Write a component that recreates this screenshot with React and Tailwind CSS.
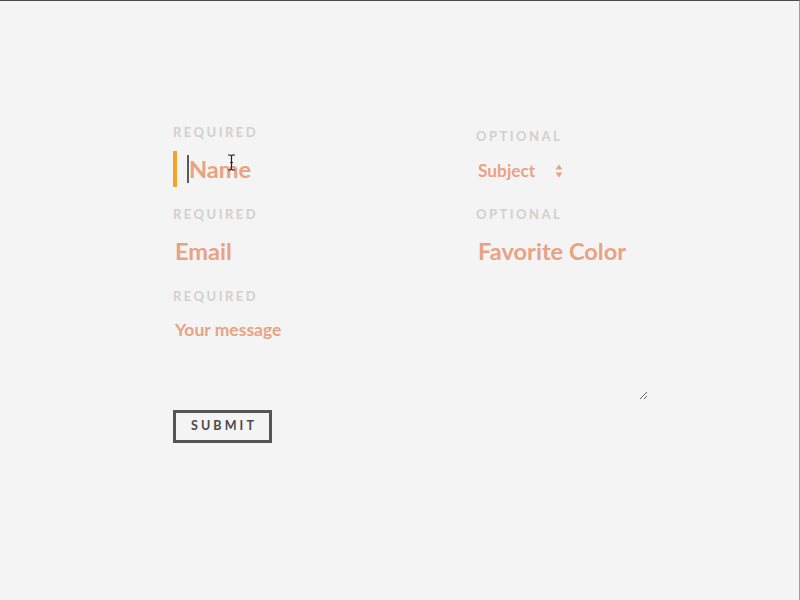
export default function App() {
  const label = "text-[13px] leading-[14px] font-bold tracking-[0.19em] text-[#d0d0d0] h-[14px]";
  const big = "text-[23.6px] leading-[36px] font-bold text-[#e9a283] h-[36px]";
  return (
    <div
      className="w-[800px] h-[600px] bg-[#f4f4f4] border-t border-t-[#4a4a4a] border-r border-r-[#a0a0a0] overflow-hidden"
      style={{ fontFamily: "Lato, 'Open Sans', sans-serif" }}
    >
      <div className="pl-[173px] pt-[124px] flex flex-col">
        <div className="grid grid-cols-[303px_172px]">
          {/* Row 1 left */}
          <div className="flex flex-col">
            <div className={label}>REQUIRED</div>
            <div className="relative mt-[12px] flex items-center h-[36px] border-l-4 border-l-[#f7a327]">
              <span className="ml-[10px] w-[2px] h-[28px] bg-[#5a5a5a]" />
              <span className={big}>Name</span>
              <svg
                className="absolute left-[50px] top-[3px]"
                width="9"
                height="17"
                viewBox="0 0 9 17"
              >
                <path d="M1 1h2.5l1 1 1-1H8M4.5 2v13M1 16h2.5l1-1 1 1H8M3 8.5h3" stroke="#222" strokeWidth="1.2" fill="none" />
              </svg>
            </div>
          </div>
          {/* Row 1 right */}
          <div className="flex flex-col pt-[4px]">
            <div className={label}>OPTIONAL</div>
            <div className="mt-[16px] flex items-center h-[24px] pl-[2px]">
              <span className="text-[17.3px] leading-[24px] font-bold text-[#e9a283]">Subject</span>
              <svg className="ml-[20px]" width="8" height="14" viewBox="0 0 8 14">
                <path d="M4 0.5L7.5 5.5H0.5Z" fill="#e9a283" />
                <path d="M4 13.5L7.5 8.5H0.5Z" fill="#e9a283" />
              </svg>
            </div>
          </div>
          {/* Row 2 left */}
          <div className="flex flex-col mt-[20px]">
            <div className={label}>REQUIRED</div>
            <div className={"mt-[12px] pl-[2px] " + big}>Email</div>
          </div>
          {/* Row 2 right */}
          <div className="flex flex-col mt-[20px]">
            <div className={label}>OPTIONAL</div>
            <div className={"mt-[12px] pl-[2px] " + big}>Favorite Color</div>
          </div>
        </div>
        <div className="flex flex-col mt-[20px]">
          <div className={label}>REQUIRED</div>
          <textarea
            placeholder="Your message"
            className="mt-[12px] w-[475px] h-[85px] pl-[2px] pt-[3px] bg-transparent border-0 outline-none resize text-[17.5px] leading-[24px] font-bold text-[#e9a283] placeholder:text-[#e9a283]"
            style={{ fontFamily: "Lato, sans-serif" }}
          />
        </div>
        <div className="mt-[10px]">
          <button className="w-[99px] h-[33px] border-[3px] border-[#555555] bg-transparent flex items-center justify-center text-[12.5px] font-bold tracking-[0.25em] text-[#4a4a4a] pl-[3px]">
            SUBMIT
          </button>
        </div>
      </div>
    </div>
  );
}
